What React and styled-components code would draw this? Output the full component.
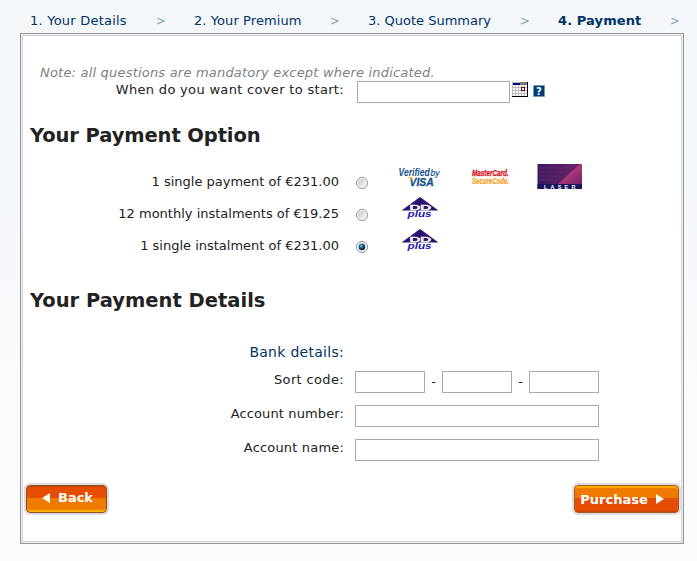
import React from "react";
import styled, { createGlobalStyle } from "styled-components";

const Global = createGlobalStyle`
  * { box-sizing: border-box; }
  body {
    margin: 0; width: 697px; height: 561px; overflow: hidden;
    background: linear-gradient(#f3f7fa, #fbfcfe);
    font: 13px/16px "DejaVu Sans", sans-serif; color: #222;
  }
`;
const Page = styled.div`height: 561px;`;
const Steps = styled.nav`
  display: grid; height: 33px; padding: 13px 0 0 30px; color: #003366;
  grid-template-columns: 126px 38px 136px 38px 152px 38px 112px 27px; white-space: nowrap;
`;
const Step = styled.span`
  font-weight: ${p => (p.$active ? "bold" : "normal")};
  letter-spacing: ${p => p.$ls || 0}px;
`;
const Arrow = styled.span`font-size: 11.5px; color: #7fa3b5; line-height: 17px;`;
const Panel = styled.main`
  width: 664px; height: 511px; margin-left: 20px; background: #fff;
  border: 1px solid #999; padding: 1px;
  box-shadow: inset 0 0 0 1px #ececf0, inset 0 0 0 2px #d3d4da;
`;
const Note = styled.p`
  margin: 0; padding: 30px 0 0 18px; height: 46px; font-style: italic; color: #808080;
  white-space: nowrap; letter-spacing: ${p => p.$ls}px;
`;
const Row = styled.div`
  display: flex; height: ${p => p.$h}px; align-items: flex-start;
`;
const Label = styled.label`
  width: ${p => p.$w || 322}px; flex: none; text-align: right; white-space: nowrap;
  padding-top: ${p => p.$top || 0}px; letter-spacing: ${p => p.$ls || 0}px;
  color: ${p => p.$color || "#222"}; font-size: ${p => p.$size || 13}px;
`;
const Input = styled.input`
  width: ${p => p.$w}px; height: 22px; border: 1px solid #a9a9b0; background: #fff;
  margin: 0 0 0 ${p => p.$left || 0}px; padding: 0 3px; outline: none; border-radius: 0;
`;
const Dash = styled.span`width: 17px; text-align: center; padding-top: 3px;`;
const Heading = styled.h2`
  margin: 0; padding: ${p => p.$top}px 0 0 8px; height: ${p => p.$h}px; white-space: nowrap;
  font-size: ${p => p.$size || 20}px; line-height: 24px; font-weight: bold; letter-spacing: ${p => p.$ls}px;
`;
const CalendarIcon = styled.svg`margin: 1px 0 0 2px; flex: none;`;
const Help = styled.svg`margin: 4px 0 0 5px; flex: none;`;
const Radio = styled.svg`margin: 14px 0 0 17px; flex: none;`;
const Marks = styled.div`
  display: grid; grid-template-columns: 73px 66px 46px; margin: 0 0 0 30px; height: 32px;
`;
const Actions = styled.div`display: flex; justify-content: space-between; padding: 0 3px 0 4px;`;
const Button = styled.button`
  display: flex; align-items: center; justify-content: center; gap: 8px; white-space: nowrap;
  width: ${p => p.$w}px; height: 28px; margin: 0; padding: ${p => (p.$flip ? "0 9px 0 0" : "0 0 3px 2px")};
  border: 1px solid ${p => (p.$flip ? "#a65a1c" : "#8d5020")}; border-radius: 4px; color: #fff;
  font: bold 13px/16px "DejaVu Sans", sans-serif; letter-spacing: ${p => p.$ls}px;
  background: ${p => p.$flip
    ? "linear-gradient(#ef7a00 0 48%, #e64d00 48%)"
    : "linear-gradient(#e64d00 0 48%, #ef7a00 48%)"};
  box-shadow: ${p => p.$flip
    ? "inset 0 2px 1px #ffb000, inset 0 -1px 1px #c74200, 0 0 0 2px #dcdce2"
    : "inset 0 -2px 1px #ffb000, inset 0 1px 1px #c74200, 0 0 0 2px #dcdce2"};
`;
const ButtonText = styled.span`position: relative; top: ${p => p.$drop || 0}px;`;

const RadioMark = ({ on }) => (
  <Radio width="12" height="12" viewBox="0 0 12 12">
    <defs>
      <linearGradient id="dish" x2="1" y2="1"><stop stopColor="#bfc3c7" /><stop offset="1" stopColor="#fafafa" /></linearGradient>
      <radialGradient id="dot" cx=".4" cy=".35"><stop stopColor="#78d5f5" /><stop offset=".55" stopColor="#176b9b" /><stop offset="1" stopColor="#082b4b" /></radialGradient>
    </defs>
    <circle cx="6" cy="6" r="5.5" fill="#fff" stroke="#8c8f91" />
    <circle cx="6" cy="6" r="4" fill="url(#dish)" />
    {on && <circle cx="6" cy="6" r="3.2" fill="url(#dot)" />}
  </Radio>
);
const Visa = () => (
  <svg width="46" height="28" viewBox="0 0 46 28" fontFamily="Liberation Sans, sans-serif" fontStyle="italic" fontWeight="bold" fill="#12508c">
    <text transform="translate(.5 12.5) scale(.8 1)" fontSize="10.8">Verified</text>
    <text transform="translate(32.5 12.5) scale(.9 1)" fontSize="9.5" fontWeight="normal" stroke="#12508c" strokeWidth=".2">by</text>
    <text transform="translate(11.5 22.5) scale(.9 1)" fontSize="11.5" stroke="#12508c" strokeWidth=".3">VISA</text>
    <path d="M10 14.3h4l1.4 4z" fill="#f5a11c" />
  </svg>
);
const MasterCard = () => (
  <svg width="46" height="28" viewBox="0 0 46 28" fontFamily="Liberation Sans, sans-serif" fontStyle="italic" fontWeight="bold">
    <text transform="translate(1 12.8) scale(.72 1)" fontSize="8.8" fill="#d5131b" stroke="#d5131b" strokeWidth=".3">MasterCard.</text>
    <text transform="translate(1 20.5) scale(.69 1)" fontSize="8.8" fill="#f59c1c" stroke="#f59c1c" strokeWidth=".2">SecureCode.</text>
  </svg>
);
const Laser = () => (
  <svg width="46" height="28" viewBox="0 0 46 28">
    <defs>
      <linearGradient id="beam" gradientUnits="userSpaceOnUse" x1="29" y1="9" x2="40" y2="22">
        <stop stopColor="#bd3d7c" /><stop offset="1" stopColor="#7b2569" />
      </linearGradient>
      <linearGradient id="field"><stop stopColor="#3b1a60" /><stop offset="1" stopColor="#6d2468" /></linearGradient>
    </defs>
    <path d="M.5 1H45v25H.5z" fill="url(#field)" />
    <path d="M2 5h32M2 9h26M2 13h22M2 17h18" stroke="#64286e" strokeWidth=".8" />
    <path d="M21 21L43 1h2v20z" fill="url(#beam)" />
    <path d="M.5 21H45v5H.5z" fill="#17185c" />
    <text x="7" y="25.6" fontFamily="Liberation Sans" fontWeight="bold" fontSize="5.5" fill="#fff" letterSpacing="3.2">LASER</text>
  </svg>
);
const DDPlus = () => (
  <svg width="44" height="32" viewBox="0 0 44 32">
    <path d="M22 2L3.5 15.5h37z" fill="#2a126d" />
    <text transform="translate(11.5 14.8) scale(2 1)" fontFamily="Liberation Sans, sans-serif" fontSize="7.5" fill="none" stroke="#fff" strokeWidth=".6">DD</text>
    <text transform="translate(9.5 22) scale(1.3 1)" fontFamily="Liberation Sans, sans-serif" fontStyle="italic" fontWeight="bold" fontSize="9" fill="#1b18b0">plus</text>
  </svg>
);

export default function App() {
  return (
    <Page>
      <Global />
      <Steps>
        <Step $ls={0.22}>1. Your Details</Step><Arrow>&gt;</Arrow>
        <Step $ls={0.08}>2. Your Premium</Step><Arrow>&gt;</Arrow>
        <Step>3. Quote Summary</Step><Arrow>&gt;</Arrow>
        <Step $active $ls={0.1}>4. Payment</Step><Arrow>&gt;</Arrow>
      </Steps>
      <Panel>
        <Note $ls={0.2}>Note: all questions are mandatory except where indicated.</Note>
        <Row $h={42}>
          <Label $top={1} $ls={0.32}>When do you want cover to start:</Label>
          <Input $w={153} $left={13} aria-label="Cover start date" />
          <CalendarIcon width="16" height="15" viewBox="0 0 16 15" shapeRendering="crispEdges">
            <path d="M0 0h16v15H0z" fill="#000" /><path d="M0 0h15v14H0z" fill="#bdbdbd" />
            <path d="M1 3h2v2H1zM4 3h2v2H4zM7 3h2v2H7zM10 3h2v2h-2zM13 3h2v2h-2zM1 6h2v2H1zM4 6h2v2H4zM7 6h2v2H7zM13 6h2v2h-2zM1 9h2v2H1zM4 9h2v2H4zM7 9h2v2H7zM10 9h2v2h-2zM13 9h2v2h-2zM1 12h2v2H1zM4 12h2v2H4zM7 12h2v2H7zM10 12h2v2h-2zM13 12h2v2h-2z" fill="#fff" />
            <path d="M1 1h7v2H1z" fill="#000080" /><path d="M8 0h7v3H8z" fill="#777" />
            <path d="M9 5h4v4H9z" fill="#800000" /><path d="M10 6h2v2h-2z" fill="#fff" />
          </CalendarIcon>
          <Help width="12" height="12" viewBox="0 0 12 12">
            <path d="M.5.5h11v11H.5z" fill="#003b78" stroke="#7898b5" />
            <text x="3" y="10" fontFamily="DejaVu Sans" fontWeight="bold" fontSize="10" fill="#fff">?</text>
          </Help>
        </Row>
        <Heading $top={1} $h={40} $size={19.5} $ls={-0.1}>Your Payment Option</Heading>
        <Row $h={32}><Label $w={317} $top={11}>1 single payment of €231.00</Label><RadioMark /><Marks><Visa /><MasterCard /><Laser /></Marks></Row>
        <Row $h={32}><Label $w={317} $top={11}>12 monthly instalments of €19.25</Label><RadioMark /><Marks><DDPlus /></Marks></Row>
        <Row $h={32}><Label $w={317} $top={11}>1 single instalment of €231.00</Label><RadioMark on /><Marks><DDPlus /></Marks></Row>
        <Heading $top={30} $h={84} $size={19.5} $ls={0}>Your Payment Details</Heading>
        <Row $h={28}><Label $size={14} $top={1} $ls={0.28} $color="#003366">Bank details:</Label></Row>
        <Row $h={34}>
          <Label $top={1} $ls={0.35}>Sort code:</Label>
          <Input $w={70} $left={11} aria-label="Sort code part 1" /><Dash>-</Dash>
          <Input $w={70} aria-label="Sort code part 2" /><Dash>-</Dash>
          <Input $w={70} aria-label="Sort code part 3" />
        </Row>
        <Row $h={34}><Label $top={1} $ls={0.12}>Account number:</Label><Input $w={244} $left={11} aria-label="Account number" /></Row>
        <Row $h={46}><Label $top={1} $ls={0.18}>Account name:</Label><Input $w={244} $left={11} aria-label="Account name" /></Row>
        <Actions>
          <Button $w={81} $ls={0}><svg width="8" height="10"><path d="M8 0v10L0 5z" fill="#fff" /></svg><ButtonText>Back</ButtonText></Button>
          <Button $w={105} $ls={0} $flip><ButtonText $drop={1}>Purchase</ButtonText><svg width="8" height="10"><path d="M0 0v10l8-5z" fill="#fff" /></svg></Button>
        </Actions>
      </Panel>
    </Page>
  );
}
